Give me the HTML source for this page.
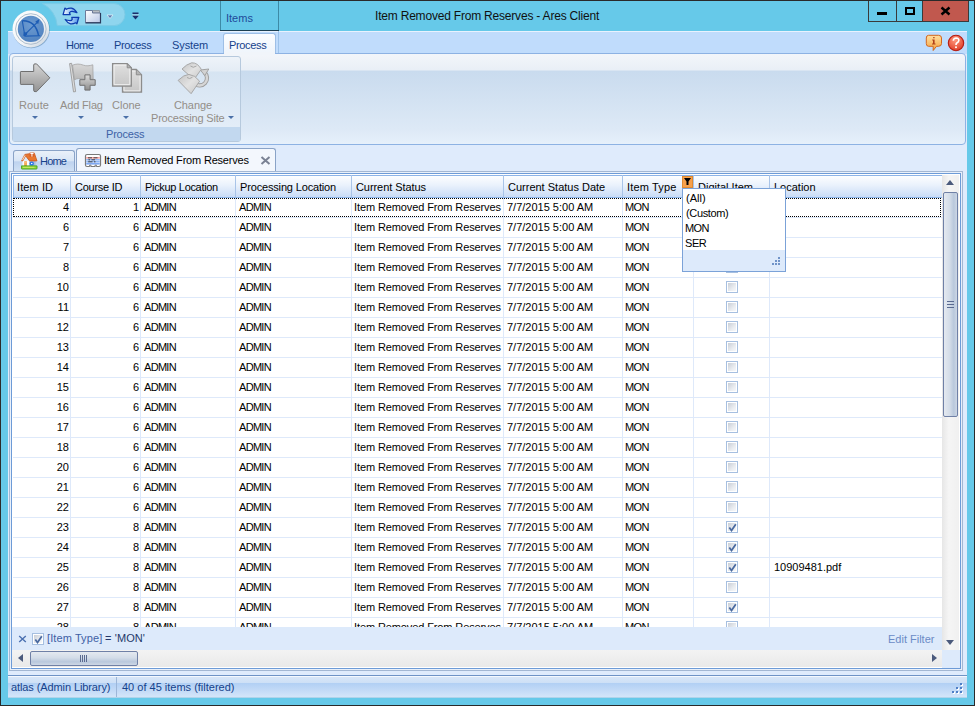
<!DOCTYPE html>
<html><head><meta charset="utf-8">
<style>
*{box-sizing:border-box;margin:0;padding:0}
html,body{width:975px;height:706px;overflow:hidden;background:#2a2a2a}
body{position:relative;font-family:"Liberation Sans",sans-serif;font-size:11px;color:#000}
.a{position:absolute}
.t{position:absolute;white-space:nowrap;line-height:12px}
#win{left:1px;top:1px;width:973px;height:704px;background:#66c9e9}
#client{left:8px;top:31px;width:959px;height:667px;background:#dfebfc}
#tabstrip{left:8px;top:31px;width:959px;height:23px;background:#c0dcfc;border-top:1px solid #e8f2fe}
.rtab{color:#15428b;font-size:11px}
#panel{left:9px;top:53px;width:957px;height:92px;border:1px solid #8db2e3;border-radius:4px;
 background:linear-gradient(#f3f6fa 0,#e9eff6 16px,#c9dbee 17px,#dde9f6 75px,#e6f0fb 100%)}
.grp{left:12px;top:56px;width:229px;height:86px;border:1px solid #b6c9dd;border-radius:3px;
 background:linear-gradient(#eef3f9 0,#e4ecf5 14px,#d6e4f2 15px,#e3edf8 70px)}
.glabel{left:13px;top:127px;width:227px;height:14px;background:#c2d8ef}
.btxt{color:#938e88;font-size:11px}
.arr{width:0;height:0;border-left:3px solid transparent;border-right:3px solid transparent;border-top:3px solid #4a70a8}
#content{left:9px;top:172px;width:953px;height:497px;border:1px solid #8aa9d4;background:#fff}
.hdr{top:175px;height:22px;background:linear-gradient(#f6f9fd,#e3ecf8 55%,#d3e1f4);border-bottom:1px solid #9fb9de;border-right:1px solid #9fb9de}
.htxt{top:181px;font-size:11px}
.row{left:13px;width:929px;height:20px;border-bottom:1px solid #dde8f6}
.cell{font-size:11px;top:0}
.vl{width:1px;background:#dde8f6}
.cb{width:12px;height:12px;border:1px solid #a6bfe0;background:#fff;padding:1px}
.cb::after{content:"";display:block;width:8px;height:8px;background:linear-gradient(135deg,#c9ced6,#e9ecf0 60%,#f7f8fa)}
</style></head><body>
<div id="win" class="a"></div>

<!-- title bar -->
<div class="t" style="left:375px;top:10px;font-size:12px;letter-spacing:-0.2px;color:#111">Item Removed From Reserves - Ares Client</div>
<!-- context header -->
<div class="a" style="left:220px;top:1px;width:1px;height:53px;background:#3d8aa6"></div>
<div class="a" style="left:278px;top:1px;width:1px;height:53px;background:#3d8aa6"></div>
<div class="a" style="left:220px;top:30px;width:59px;height:1px;background:#1c3f52"></div>
<div class="t" style="left:226px;top:12px;color:#1f4a9a">Items</div>

<!-- window buttons -->
<div class="a" style="left:868px;top:1px;width:101px;height:21px;border:1px solid #3a3a3a;border-top:0;background:#66c9e9"></div>
<div class="a" style="left:896px;top:1px;width:1px;height:20px;background:#3a3a3a"></div>
<div class="a" style="left:922px;top:1px;width:46px;height:20px;background:#c1584e;border-left:1px solid #3a3a3a"></div>
<div class="a" style="left:877px;top:12px;width:10px;height:3px;background:#000"></div>
<div class="a" style="left:905px;top:7px;width:10px;height:8px;border:2px solid #000"></div>
<svg class="a" style="left:940px;top:6px" width="11" height="10" viewBox="0 0 11 10"><path d="M1.5 1.5 L9.5 8.5 M9.5 1.5 L1.5 8.5" stroke="#000" stroke-width="2.4"/></svg>

<div id="client" class="a"></div>
<div id="tabstrip" class="a"></div>
<div class="a" style="left:278px;top:31px;width:1px;height:23px;background:#9ec3ea"></div>

<!-- quick access pill -->
<svg class="a" style="left:0;top:0" width="130" height="30" viewBox="0 0 130 30"><path d="M42.3 3.6 H114 A11 11 0 0 1 114 25.6 H57.2 A26.6 26.6 0 0 0 42.3 3.6 Z" fill="#8fd5ee" stroke="#7ccbe6" stroke-width="1"/></svg>

<!-- app orb -->
<svg class="a" style="left:10px;top:8px" width="42" height="43" viewBox="0 0 42 43">
<defs><radialGradient id="og" cx="50%" cy="35%" r="65%"><stop offset="0" stop-color="#6c9bd2"/><stop offset="1" stop-color="#5283bf"/></radialGradient>
<linearGradient id="ring" x1="0" y1="0" x2="1" y2="1"><stop offset="0" stop-color="#ffffff"/><stop offset=".6" stop-color="#f1f4f7"/><stop offset="1" stop-color="#c4d0dc"/></linearGradient></defs>
<circle cx="21.3" cy="21.6" r="18.6" fill="#3a6a96" opacity=".45"/>
<circle cx="20.85" cy="21" r="18.4" fill="url(#ring)"/>
<circle cx="20.85" cy="21" r="15.3" fill="none" stroke="#a7b8c8" stroke-width=".9"/>
<circle cx="20.85" cy="20.9" r="13.1" fill="url(#og)"/>
<path d="M12.2 12.3 L14.9 28.1 L30.2 27.8" fill="none" stroke="#1d5cb4" stroke-width="1.1"/>
<path d="M12.6 12.8 Q25.5 12.5 28.6 27.6" fill="none" stroke="#1d5cb4" stroke-width="1.5"/>
<path d="M15.5 25.8 L27 14.6" fill="none" stroke="#1d5cb4" stroke-width="1.1"/>
<path d="M25.2 13.8 L29.4 11 L28.2 16 Z" fill="#1d5cb4"/>
<path d="M13.8 24.2 L17.3 24.6 L17 26.2 L15.4 28 L13.2 27.8 Z" fill="#1d5cb4"/>
</svg>
<!-- QAT icons -->
<svg class="a" style="left:61px;top:6px" width="20" height="20" viewBox="0 0 20 20">
<defs><linearGradient id="rg" x1="0" y1="0" x2="1" y2="0"><stop offset="0" stop-color="#f4faff"/><stop offset="1" stop-color="#4f95ea"/></linearGradient></defs>
<path d="M2.1 8.6 L3.9 2.1 L5.3 3.3 Q8 1.8 10.5 2.2 Q13.5 2.8 15.9 6.6 Q13.5 5.6 11 5.3 Q9.3 5.2 8.4 6.8 L9.2 8.6 Z" fill="url(#rg)" stroke="#0d3cb0" stroke-width="1.3" stroke-linejoin="round"/>
<path d="M17.8 11.3 L15.9 17.8 L14.6 16.8 Q12 18.2 9.5 17.8 Q6.6 17.2 4.2 13.5 Q6.5 14.4 9 14.6 Q10.8 14.6 11.2 13.2 L10.8 11.3 Z" fill="url(#rg)" stroke="#0d3cb0" stroke-width="1.3" stroke-linejoin="round"/>
</svg>
<svg class="a" style="left:84px;top:9px" width="18" height="15" viewBox="0 0 18 15">
<defs><linearGradient id="fg" x1="0" y1="0" x2="1" y2="1"><stop offset="0" stop-color="#ffffff"/><stop offset="1" stop-color="#b9c6e6"/></linearGradient></defs>
<path d="M8.5 1.5 H15.5 V4 H8.5 Z" fill="#b8bcc4" stroke="#8a8f98" stroke-width=".8"/>
<path d="M1.5 1.5 H8.5 V4 H16.5 V13.5 H1.5 Z" fill="url(#fg)" stroke="#6c7a9a" stroke-width="1"/>
<path d="M16.5 4 V13.8 H1.5" fill="none" stroke="#2b3a5c" stroke-width="1.2"/>
</svg>
<svg class="a" style="left:106px;top:14px" width="8" height="6" viewBox="0 0 8 6"><path d="M1 1 H7 L4 4.5 Z" fill="#5d7bb0" stroke="#e8f6fc" stroke-width=".7"/></svg>
<svg class="a" style="left:131px;top:11px" width="9" height="10" viewBox="0 0 9 10"><rect x="1.5" y="1.5" width="6" height="1.6" fill="#1b2f6b"/><path d="M1 4.5 H8 L4.5 8.5 Z" fill="#1b2f6b"/><path d="M1 4 H8" stroke="#fff" stroke-width=".6"/></svg>
<!-- ribbon tabs -->
<svg class="a" style="left:925px;top:34px" width="18" height="18" viewBox="0 0 18 18">
<defs><linearGradient id="ig" x1="0" y1="0" x2="0" y2="1"><stop offset="0" stop-color="#ffe0a0"/><stop offset="1" stop-color="#f6a13c"/></linearGradient></defs>
<path d="M3.5 1.3 H13.5 Q16.5 1.3 16.5 4 V9.5 Q16.5 12.3 13.5 12.3 H11.5 L8.2 16.5 L8.2 12.3 H3.5 Q1.3 12.3 1.3 9.5 V4 Q1.3 1.3 3.5 1.3 Z" fill="url(#ig)" stroke="#d2661e" stroke-width="1"/>
<path d="M8.2 3 H9.6 V4.3 H8.2 Z M7.2 5.5 H9.6 V9.5 H10.5 V10.5 H7 V9.5 H8 V6.5 H7.2 Z" fill="#b2401a"/>
</svg>
<svg class="a" style="left:947px;top:34px" width="18" height="18" viewBox="0 0 18 18">
<defs><radialGradient id="hg" cx="45%" cy="30%" r="70%"><stop offset="0" stop-color="#ff9a80"/><stop offset="1" stop-color="#e0402a"/></radialGradient></defs>
<circle cx="9" cy="9" r="7.7" fill="url(#hg)" stroke="#b51c12" stroke-width="1.1"/>
<path d="M6.3 6.8 Q6.5 4 9.2 4 Q12 4.2 11.8 6.6 Q11.5 8.2 9.8 9 Q9 9.6 9 11" fill="none" stroke="#fff" stroke-width="1.6"/>
<circle cx="9" cy="13.2" r="1" fill="#fff"/>
</svg>
<div class="t rtab" style="left:66px;top:39px;letter-spacing:-0.5px">Home</div>
<div class="t rtab" style="left:114px;top:39px;letter-spacing:-0.35px">Process</div>
<div class="t rtab" style="left:172px;top:39px;letter-spacing:-0.1px">System</div>
<div class="a" style="left:223px;top:33px;width:53px;height:22px;border:1px solid #9ebfe6;border-bottom:0;border-radius:3px 3px 0 0;background:linear-gradient(#fbfdff,#eef4fb)"></div>
<div class="t rtab" style="left:229px;top:39px;letter-spacing:-0.35px">Process</div>

<!-- ribbon panel -->
<div id="panel" class="a"></div>
<div class="a grp"></div>
<div class="a glabel"></div>
<div class="a" style="left:224px;top:52px;width:51px;height:3px;background:#f1f5fa"></div>
<div class="t" style="left:106px;top:128px;color:#3d62a6;letter-spacing:-0.2px">Process</div>

<!-- ribbon icons -->
<svg class="a" style="left:18px;top:62px" width="34" height="32" viewBox="0 0 34 32">
<defs><linearGradient id="gg" x1="0" y1="0" x2="0" y2="1"><stop offset="0" stop-color="#d6d6d6"/><stop offset="1" stop-color="#939393"/></linearGradient></defs>
<path d="M3 9.5 H15.7 V3 Q15.7 1.9 17 1.9 H18.6 L31.8 15.8 L18.6 29.6 H17 Q15.7 29.6 15.7 28.5 V22.4 H3 Q2.4 22.4 2.4 21.8 V10.1 Q2.4 9.5 3 9.5 Z" fill="url(#gg)" stroke="#6f6f6f" stroke-width="1"/>
</svg>
<svg class="a" style="left:66px;top:62px" width="32" height="32" viewBox="0 0 32 32">
<defs><linearGradient id="gf" x1="0" y1="0" x2="0" y2="1"><stop offset="0" stop-color="#d8d8d8"/><stop offset="1" stop-color="#b8b8b8"/></linearGradient>
<linearGradient id="gp" x1="0" y1="0" x2="0" y2="1"><stop offset="0" stop-color="#dcdcdc"/><stop offset="1" stop-color="#8e8e8e"/></linearGradient></defs>
<path d="M6.5 3.2 C10 1.8 13.5 1.6 17.5 3.2 C20.5 4.3 23.5 3.8 26.8 2.8 L27.2 17 C24 17.8 21 18.2 17.5 17.2 C14 16 11 16.3 8.5 17.8 Z" fill="url(#gf)" stroke="#a4a4a4" stroke-width=".8"/>
<path d="M3.6 1.6 L5.6 1.3 L9.6 29.6 L7.5 29.9 Z" fill="#dedede" stroke="#9a9a9a" stroke-width=".9"/>
<path d="M18.9 12.9 H24.1 V17.7 H29.2 V23.3 H24.1 V28.1 H18.9 V23.3 H13.8 V17.7 H18.9 Z" fill="url(#gp)" stroke="#707070" stroke-width="1"/>
</svg>
<svg class="a" style="left:110px;top:61px" width="34" height="34" viewBox="0 0 34 34">
<defs><linearGradient id="gc" x1="0" y1="0" x2="0" y2="1"><stop offset="0" stop-color="#e0e0e0"/><stop offset="1" stop-color="#c6c6c6"/></linearGradient></defs>
<path d="M12.5 8.5 H26.3 L31.5 13.8 V31.2 H12.5 Z" fill="url(#gc)" stroke="#8c8c8c" stroke-width="1.3"/>
<path d="M14 10 H25.6 L30 14.5 V29.8 H14 Z" fill="none" stroke="#f2f2f2" stroke-width=".9"/>
<path d="M26.3 8.5 V13.8 H31.5" fill="#b4b4b4" stroke="#8c8c8c" stroke-width="1"/>
<path d="M2.6 2.6 H17.2 L21.3 6.8 V25.1 H2.6 Z" fill="url(#gc)" stroke="#8c8c8c" stroke-width="1.3"/>
<path d="M4.1 4.1 H16.6 L19.8 7.4 V23.6 H4.1 Z" fill="none" stroke="#f2f2f2" stroke-width=".9"/>
<path d="M17.2 2.6 V6.8 H21.3 Z" fill="#b4b4b4" stroke="#8c8c8c" stroke-width="1"/>
</svg>
<svg class="a" style="left:175px;top:60px" width="36" height="36" viewBox="0 0 36 36">
<defs><linearGradient id="gs" x1="0" y1="0" x2="1" y2="1"><stop offset="0" stop-color="#c4c4c4"/><stop offset=".5" stop-color="#e2e2e2"/><stop offset="1" stop-color="#c8c8c8"/></linearGradient></defs>
<path d="M19.5 23.5 A7 7 0 1 0 29.6 12.5" fill="none" stroke="#9c9c9c" stroke-width="4.2"/>
<path d="M19.5 23.5 A7 7 0 1 0 29.6 12.5" fill="none" stroke="#d6d6d6" stroke-width="2.4"/>
<path d="M25.4 10 L33.8 9 L29.8 15.6 Z" fill="#d2d2d2" stroke="#9c9c9c" stroke-width=".9"/>
<path d="M7 9 Q11.5 4.2 16.7 2.8 Q22.4 2.5 26.3 9.3 L19 19.5 Z" fill="url(#gs)" stroke="#a2a2a2" stroke-width=".9"/>
<path d="M3.1 20.4 Q9 14.5 13.9 14.4 Q20 15 24.6 21.2 L16.1 33.7 Z" fill="url(#gs)" stroke="#a2a2a2" stroke-width=".9"/>
<path d="M12 17.5 Q14.5 19.8 17.5 17.2" fill="none" stroke="#a0a0a0" stroke-width=".9"/>
<path d="M15.5 6 Q18 8.5 21.5 6" fill="none" stroke="#a0a0a0" stroke-width=".9"/>
</svg>
<div class="t btxt" style="left:19px;top:99px;letter-spacing:0.15px">Route</div>
<div class="a arr" style="left:32px;top:116px"></div>
<div class="t btxt" style="left:60px;top:99px;letter-spacing:-0.15px">Add Flag</div>
<div class="a arr" style="left:78px;top:116px"></div>
<div class="t btxt" style="left:112px;top:99px;letter-spacing:0px">Clone</div>
<div class="a arr" style="left:123px;top:116px"></div>
<div class="t btxt" style="left:174px;top:99px;letter-spacing:-0.1px">Change</div>
<div class="t btxt" style="left:151px;top:112px;letter-spacing:-0.2px">Processing Site</div>
<div class="a arr" style="left:228px;top:116px"></div>

<!-- doc tabs -->
<div class="a" style="left:13px;top:150px;width:62px;height:22px;border:1px solid #8aa3c7;border-bottom:0;border-radius:3px 3px 0 0;background:linear-gradient(#e9f0f9,#d9e6f6 45%,#bed3ef 52%,#c9dbf2 80%,#d3e3f6)"></div>
<svg class="a" style="left:21px;top:152px" width="17" height="18" viewBox="0 0 17 18">
<rect x="1.5" y="8.6" width="6.8" height="5.4" fill="#fbfdff"/>
<rect x="8.3" y="8.6" width="6.3" height="5.4" fill="#a9bbdb"/>
<rect x="3.2" y="9.3" width="2.7" height="4.7" fill="#f2983a"/>
<path d="M3.5 10.5 H5.6 M3.5 12 H5.6" stroke="#fbd6a8" stroke-width=".6"/>
<circle cx="10.7" cy="11.6" r="2.2" fill="#2a78ea"/>
<path d="M10 10.7 L12 11.5 L10 12.3 Z" fill="#fff"/>
<path d="M0.6 8.9 L3.9 2.4 L8.6 1.7 L13.4 1.3 L16 8.9 L8.5 8.9 L4.6 3.8 L1.8 8.9 Z" fill="#e9772f" stroke="#c8561c" stroke-width=".8" stroke-linejoin="round"/>
<path d="M1.5 8.2 L4 3.4" stroke="#ffe0c0" stroke-width="1"/>
<rect x="8.6" y="0.6" width="4.6" height="4.2" fill="#d6602a"/>
<path d="M9.4 1.5 H12.5 M10.95 1.5 V4.6" stroke="#fff" stroke-width="1"/>
<path d="M0.4 13.9 H16 V16.4 Q16 17 15.4 17 H1 Q0.4 17 0.4 16.4 Z" fill="#96d83a" stroke="#3e9e1c" stroke-width=".9"/>
<path d="M2 15.3 H13.5" stroke="#d8f070" stroke-width=".8"/>
</svg>
<div class="t" style="left:40px;top:155px;color:#15428b;letter-spacing:-0.8px">Home</div>
<div class="a" style="left:76px;top:148px;width:200px;height:25px;border:1px solid #8aa3c7;border-bottom:0;border-radius:3px 3px 0 0;background:#f3f7fd"></div>
<svg class="a" style="left:84px;top:153px" width="18" height="15" viewBox="0 0 18 15">
<rect x="1.5" y="1.5" width="15" height="12" rx="1.5" fill="#fff" stroke="#7a7a7a" stroke-width="1.2"/>
<rect x="2.2" y="4" width="13.6" height="1.6" fill="#f7a0a0"/>
<rect x="2.2" y="6" width="13.6" height="1.6" fill="#8fb6f5"/>
<rect x="2.2" y="8" width="13.6" height="1.6" fill="#8fb6f5"/>
<rect x="2.2" y="10" width="13.6" height="1.6" fill="#7ea8f2"/>
<path d="M4 4.8 H8 M9.5 4.8 H13.5 M4.5 6.8 H6 M7.5 6.8 H11 M4.2 8.8 H8.5 M10 8.8 H11.5" stroke="#444" stroke-width="1"/>
<path d="M5.5 13.5 V12.2 H7 V13.5 M11 13.5 V12.2 H12.5 V13.5" fill="#fff" stroke="#7a7a7a" stroke-width="1"/>
</svg>
<div class="t" style="left:104px;top:154px;color:#000;letter-spacing:-0.19px">Item Removed From Reserves</div>
<svg class="a" style="left:260px;top:156px" width="11" height="9" viewBox="0 0 11 9"><path d="M1.5 1 L9.5 8 M9.5 1 L1.5 8" stroke="#7a8294" stroke-width="2"/></svg>
<div class="a" style="left:9px;top:171px;width:954px;height:500px;border:1px solid #a3b7d3;background:#e9f0fa"></div>
<div class="a" style="left:11px;top:173px;width:950px;height:496px;border:1px solid #6d9bd7;background:#fff"></div>























<!--GRID-->
<div class="a" style="left:13px;top:175px;width:929px;height:452px;overflow:hidden">
<div class="a" style="left:0;top:0;width:929px;height:23px;background:linear-gradient(#fdfeff,#e9f1fc 45%,#c9dcf6);border-bottom:1px solid #8db4e8;border-left:1px solid #8db4e8;border-top:1px solid #8db4e8"></div>
<div class="t" style="left:4px;top:6px;letter-spacing:0.1px">Item ID</div>
<div class="a" style="left:57px;top:0;width:1px;height:22px;background:#a9c4e8"></div>
<div class="t" style="left:62px;top:6px;letter-spacing:-0.26px">Course ID</div>
<div class="a" style="left:127px;top:0;width:1px;height:22px;background:#a9c4e8"></div>
<div class="t" style="left:132px;top:6px;letter-spacing:-0.32px">Pickup Location</div>
<div class="a" style="left:222px;top:0;width:1px;height:22px;background:#a9c4e8"></div>
<div class="t" style="left:227px;top:6px;letter-spacing:-0.16px">Processing Location</div>
<div class="a" style="left:338px;top:0;width:1px;height:22px;background:#a9c4e8"></div>
<div class="t" style="left:343px;top:6px;letter-spacing:-0.07px">Current Status</div>
<div class="a" style="left:490px;top:0;width:1px;height:22px;background:#a9c4e8"></div>
<div class="t" style="left:495px;top:6px;letter-spacing:0px">Current Status Date</div>
<div class="a" style="left:609px;top:0;width:1px;height:22px;background:#a9c4e8"></div>
<div class="t" style="left:614px;top:6px;letter-spacing:0.15px">Item Type</div>
<div class="a" style="left:680px;top:0;width:1px;height:22px;background:#a9c4e8"></div>
<div class="t" style="left:685px;top:6px;letter-spacing:0px">Digital Item</div>
<div class="a" style="left:756px;top:0;width:1px;height:22px;background:#a9c4e8"></div>
<div class="t" style="left:761px;top:6px;letter-spacing:0px">Location</div>
<div class="a" style="left:0;top:42px;width:929px;height:1px;background:#dee9fa"></div>
<div class="t" style="left:0px;width:56px;text-align:right;top:26px">4</div>
<div class="t" style="left:58px;width:68px;text-align:right;top:26px">1</div>
<div class="t" style="left:131px;top:26px;letter-spacing:-0.7px">ADMIN</div>
<div class="t" style="left:226px;top:26px;letter-spacing:-0.7px">ADMIN</div>
<div class="t" style="left:341px;top:26px;letter-spacing:-0.11px">Item Removed From Reserves</div>
<div class="t" style="left:494px;top:26px;letter-spacing:0px">7/7/2015 5:00 AM</div>
<div class="t" style="left:612px;top:26px;letter-spacing:-0.6px">MON</div>
<div class="a cb" style="left:713px;top:26px"></div>
<div class="a" style="left:0;top:62px;width:929px;height:1px;background:#dee9fa"></div>
<div class="t" style="left:0px;width:56px;text-align:right;top:46px">6</div>
<div class="t" style="left:58px;width:68px;text-align:right;top:46px">6</div>
<div class="t" style="left:131px;top:46px;letter-spacing:-0.7px">ADMIN</div>
<div class="t" style="left:226px;top:46px;letter-spacing:-0.7px">ADMIN</div>
<div class="t" style="left:341px;top:46px;letter-spacing:-0.11px">Item Removed From Reserves</div>
<div class="t" style="left:494px;top:46px;letter-spacing:0px">7/7/2015 5:00 AM</div>
<div class="t" style="left:612px;top:46px;letter-spacing:-0.6px">MON</div>
<div class="a cb" style="left:713px;top:46px"></div>
<div class="a" style="left:0;top:82px;width:929px;height:1px;background:#dee9fa"></div>
<div class="t" style="left:0px;width:56px;text-align:right;top:66px">7</div>
<div class="t" style="left:58px;width:68px;text-align:right;top:66px">6</div>
<div class="t" style="left:131px;top:66px;letter-spacing:-0.7px">ADMIN</div>
<div class="t" style="left:226px;top:66px;letter-spacing:-0.7px">ADMIN</div>
<div class="t" style="left:341px;top:66px;letter-spacing:-0.11px">Item Removed From Reserves</div>
<div class="t" style="left:494px;top:66px;letter-spacing:0px">7/7/2015 5:00 AM</div>
<div class="t" style="left:612px;top:66px;letter-spacing:-0.6px">MON</div>
<div class="a cb" style="left:713px;top:66px"></div>
<div class="a" style="left:0;top:102px;width:929px;height:1px;background:#dee9fa"></div>
<div class="t" style="left:0px;width:56px;text-align:right;top:86px">8</div>
<div class="t" style="left:58px;width:68px;text-align:right;top:86px">6</div>
<div class="t" style="left:131px;top:86px;letter-spacing:-0.7px">ADMIN</div>
<div class="t" style="left:226px;top:86px;letter-spacing:-0.7px">ADMIN</div>
<div class="t" style="left:341px;top:86px;letter-spacing:-0.11px">Item Removed From Reserves</div>
<div class="t" style="left:494px;top:86px;letter-spacing:0px">7/7/2015 5:00 AM</div>
<div class="t" style="left:612px;top:86px;letter-spacing:-0.6px">MON</div>
<div class="a cb" style="left:713px;top:86px"></div>
<div class="a" style="left:0;top:122px;width:929px;height:1px;background:#dee9fa"></div>
<div class="t" style="left:0px;width:56px;text-align:right;top:106px">10</div>
<div class="t" style="left:58px;width:68px;text-align:right;top:106px">6</div>
<div class="t" style="left:131px;top:106px;letter-spacing:-0.7px">ADMIN</div>
<div class="t" style="left:226px;top:106px;letter-spacing:-0.7px">ADMIN</div>
<div class="t" style="left:341px;top:106px;letter-spacing:-0.11px">Item Removed From Reserves</div>
<div class="t" style="left:494px;top:106px;letter-spacing:0px">7/7/2015 5:00 AM</div>
<div class="t" style="left:612px;top:106px;letter-spacing:-0.6px">MON</div>
<div class="a cb" style="left:713px;top:106px"></div>
<div class="a" style="left:0;top:142px;width:929px;height:1px;background:#dee9fa"></div>
<div class="t" style="left:0px;width:56px;text-align:right;top:126px">11</div>
<div class="t" style="left:58px;width:68px;text-align:right;top:126px">6</div>
<div class="t" style="left:131px;top:126px;letter-spacing:-0.7px">ADMIN</div>
<div class="t" style="left:226px;top:126px;letter-spacing:-0.7px">ADMIN</div>
<div class="t" style="left:341px;top:126px;letter-spacing:-0.11px">Item Removed From Reserves</div>
<div class="t" style="left:494px;top:126px;letter-spacing:0px">7/7/2015 5:00 AM</div>
<div class="t" style="left:612px;top:126px;letter-spacing:-0.6px">MON</div>
<div class="a cb" style="left:713px;top:126px"></div>
<div class="a" style="left:0;top:162px;width:929px;height:1px;background:#dee9fa"></div>
<div class="t" style="left:0px;width:56px;text-align:right;top:146px">12</div>
<div class="t" style="left:58px;width:68px;text-align:right;top:146px">6</div>
<div class="t" style="left:131px;top:146px;letter-spacing:-0.7px">ADMIN</div>
<div class="t" style="left:226px;top:146px;letter-spacing:-0.7px">ADMIN</div>
<div class="t" style="left:341px;top:146px;letter-spacing:-0.11px">Item Removed From Reserves</div>
<div class="t" style="left:494px;top:146px;letter-spacing:0px">7/7/2015 5:00 AM</div>
<div class="t" style="left:612px;top:146px;letter-spacing:-0.6px">MON</div>
<div class="a cb" style="left:713px;top:146px"></div>
<div class="a" style="left:0;top:182px;width:929px;height:1px;background:#dee9fa"></div>
<div class="t" style="left:0px;width:56px;text-align:right;top:166px">13</div>
<div class="t" style="left:58px;width:68px;text-align:right;top:166px">6</div>
<div class="t" style="left:131px;top:166px;letter-spacing:-0.7px">ADMIN</div>
<div class="t" style="left:226px;top:166px;letter-spacing:-0.7px">ADMIN</div>
<div class="t" style="left:341px;top:166px;letter-spacing:-0.11px">Item Removed From Reserves</div>
<div class="t" style="left:494px;top:166px;letter-spacing:0px">7/7/2015 5:00 AM</div>
<div class="t" style="left:612px;top:166px;letter-spacing:-0.6px">MON</div>
<div class="a cb" style="left:713px;top:166px"></div>
<div class="a" style="left:0;top:202px;width:929px;height:1px;background:#dee9fa"></div>
<div class="t" style="left:0px;width:56px;text-align:right;top:186px">14</div>
<div class="t" style="left:58px;width:68px;text-align:right;top:186px">6</div>
<div class="t" style="left:131px;top:186px;letter-spacing:-0.7px">ADMIN</div>
<div class="t" style="left:226px;top:186px;letter-spacing:-0.7px">ADMIN</div>
<div class="t" style="left:341px;top:186px;letter-spacing:-0.11px">Item Removed From Reserves</div>
<div class="t" style="left:494px;top:186px;letter-spacing:0px">7/7/2015 5:00 AM</div>
<div class="t" style="left:612px;top:186px;letter-spacing:-0.6px">MON</div>
<div class="a cb" style="left:713px;top:186px"></div>
<div class="a" style="left:0;top:222px;width:929px;height:1px;background:#dee9fa"></div>
<div class="t" style="left:0px;width:56px;text-align:right;top:206px">15</div>
<div class="t" style="left:58px;width:68px;text-align:right;top:206px">6</div>
<div class="t" style="left:131px;top:206px;letter-spacing:-0.7px">ADMIN</div>
<div class="t" style="left:226px;top:206px;letter-spacing:-0.7px">ADMIN</div>
<div class="t" style="left:341px;top:206px;letter-spacing:-0.11px">Item Removed From Reserves</div>
<div class="t" style="left:494px;top:206px;letter-spacing:0px">7/7/2015 5:00 AM</div>
<div class="t" style="left:612px;top:206px;letter-spacing:-0.6px">MON</div>
<div class="a cb" style="left:713px;top:206px"></div>
<div class="a" style="left:0;top:242px;width:929px;height:1px;background:#dee9fa"></div>
<div class="t" style="left:0px;width:56px;text-align:right;top:226px">16</div>
<div class="t" style="left:58px;width:68px;text-align:right;top:226px">6</div>
<div class="t" style="left:131px;top:226px;letter-spacing:-0.7px">ADMIN</div>
<div class="t" style="left:226px;top:226px;letter-spacing:-0.7px">ADMIN</div>
<div class="t" style="left:341px;top:226px;letter-spacing:-0.11px">Item Removed From Reserves</div>
<div class="t" style="left:494px;top:226px;letter-spacing:0px">7/7/2015 5:00 AM</div>
<div class="t" style="left:612px;top:226px;letter-spacing:-0.6px">MON</div>
<div class="a cb" style="left:713px;top:226px"></div>
<div class="a" style="left:0;top:262px;width:929px;height:1px;background:#dee9fa"></div>
<div class="t" style="left:0px;width:56px;text-align:right;top:246px">17</div>
<div class="t" style="left:58px;width:68px;text-align:right;top:246px">6</div>
<div class="t" style="left:131px;top:246px;letter-spacing:-0.7px">ADMIN</div>
<div class="t" style="left:226px;top:246px;letter-spacing:-0.7px">ADMIN</div>
<div class="t" style="left:341px;top:246px;letter-spacing:-0.11px">Item Removed From Reserves</div>
<div class="t" style="left:494px;top:246px;letter-spacing:0px">7/7/2015 5:00 AM</div>
<div class="t" style="left:612px;top:246px;letter-spacing:-0.6px">MON</div>
<div class="a cb" style="left:713px;top:246px"></div>
<div class="a" style="left:0;top:282px;width:929px;height:1px;background:#dee9fa"></div>
<div class="t" style="left:0px;width:56px;text-align:right;top:266px">18</div>
<div class="t" style="left:58px;width:68px;text-align:right;top:266px">6</div>
<div class="t" style="left:131px;top:266px;letter-spacing:-0.7px">ADMIN</div>
<div class="t" style="left:226px;top:266px;letter-spacing:-0.7px">ADMIN</div>
<div class="t" style="left:341px;top:266px;letter-spacing:-0.11px">Item Removed From Reserves</div>
<div class="t" style="left:494px;top:266px;letter-spacing:0px">7/7/2015 5:00 AM</div>
<div class="t" style="left:612px;top:266px;letter-spacing:-0.6px">MON</div>
<div class="a cb" style="left:713px;top:266px"></div>
<div class="a" style="left:0;top:302px;width:929px;height:1px;background:#dee9fa"></div>
<div class="t" style="left:0px;width:56px;text-align:right;top:286px">20</div>
<div class="t" style="left:58px;width:68px;text-align:right;top:286px">6</div>
<div class="t" style="left:131px;top:286px;letter-spacing:-0.7px">ADMIN</div>
<div class="t" style="left:226px;top:286px;letter-spacing:-0.7px">ADMIN</div>
<div class="t" style="left:341px;top:286px;letter-spacing:-0.11px">Item Removed From Reserves</div>
<div class="t" style="left:494px;top:286px;letter-spacing:0px">7/7/2015 5:00 AM</div>
<div class="t" style="left:612px;top:286px;letter-spacing:-0.6px">MON</div>
<div class="a cb" style="left:713px;top:286px"></div>
<div class="a" style="left:0;top:322px;width:929px;height:1px;background:#dee9fa"></div>
<div class="t" style="left:0px;width:56px;text-align:right;top:306px">21</div>
<div class="t" style="left:58px;width:68px;text-align:right;top:306px">6</div>
<div class="t" style="left:131px;top:306px;letter-spacing:-0.7px">ADMIN</div>
<div class="t" style="left:226px;top:306px;letter-spacing:-0.7px">ADMIN</div>
<div class="t" style="left:341px;top:306px;letter-spacing:-0.11px">Item Removed From Reserves</div>
<div class="t" style="left:494px;top:306px;letter-spacing:0px">7/7/2015 5:00 AM</div>
<div class="t" style="left:612px;top:306px;letter-spacing:-0.6px">MON</div>
<div class="a cb" style="left:713px;top:306px"></div>
<div class="a" style="left:0;top:342px;width:929px;height:1px;background:#dee9fa"></div>
<div class="t" style="left:0px;width:56px;text-align:right;top:326px">22</div>
<div class="t" style="left:58px;width:68px;text-align:right;top:326px">6</div>
<div class="t" style="left:131px;top:326px;letter-spacing:-0.7px">ADMIN</div>
<div class="t" style="left:226px;top:326px;letter-spacing:-0.7px">ADMIN</div>
<div class="t" style="left:341px;top:326px;letter-spacing:-0.11px">Item Removed From Reserves</div>
<div class="t" style="left:494px;top:326px;letter-spacing:0px">7/7/2015 5:00 AM</div>
<div class="t" style="left:612px;top:326px;letter-spacing:-0.6px">MON</div>
<div class="a cb" style="left:713px;top:326px"></div>
<div class="a" style="left:0;top:362px;width:929px;height:1px;background:#dee9fa"></div>
<div class="t" style="left:0px;width:56px;text-align:right;top:346px">23</div>
<div class="t" style="left:58px;width:68px;text-align:right;top:346px">8</div>
<div class="t" style="left:131px;top:346px;letter-spacing:-0.7px">ADMIN</div>
<div class="t" style="left:226px;top:346px;letter-spacing:-0.7px">ADMIN</div>
<div class="t" style="left:341px;top:346px;letter-spacing:-0.11px">Item Removed From Reserves</div>
<div class="t" style="left:494px;top:346px;letter-spacing:0px">7/7/2015 5:00 AM</div>
<div class="t" style="left:612px;top:346px;letter-spacing:-0.6px">MON</div>
<div class="a cb" style="left:713px;top:346px"></div>
<svg class="a" style="left:715px;top:348px" width="9" height="9" viewBox="0 0 9 9"><path d="M1.3 4.5 L3.5 7.5 L7.8 1.3" stroke="#4a6aa0" stroke-width="1.8" fill="none"/></svg>
<div class="a" style="left:0;top:382px;width:929px;height:1px;background:#dee9fa"></div>
<div class="t" style="left:0px;width:56px;text-align:right;top:366px">24</div>
<div class="t" style="left:58px;width:68px;text-align:right;top:366px">8</div>
<div class="t" style="left:131px;top:366px;letter-spacing:-0.7px">ADMIN</div>
<div class="t" style="left:226px;top:366px;letter-spacing:-0.7px">ADMIN</div>
<div class="t" style="left:341px;top:366px;letter-spacing:-0.11px">Item Removed From Reserves</div>
<div class="t" style="left:494px;top:366px;letter-spacing:0px">7/7/2015 5:00 AM</div>
<div class="t" style="left:612px;top:366px;letter-spacing:-0.6px">MON</div>
<div class="a cb" style="left:713px;top:366px"></div>
<svg class="a" style="left:715px;top:368px" width="9" height="9" viewBox="0 0 9 9"><path d="M1.3 4.5 L3.5 7.5 L7.8 1.3" stroke="#4a6aa0" stroke-width="1.8" fill="none"/></svg>
<div class="a" style="left:0;top:402px;width:929px;height:1px;background:#dee9fa"></div>
<div class="t" style="left:0px;width:56px;text-align:right;top:386px">25</div>
<div class="t" style="left:58px;width:68px;text-align:right;top:386px">8</div>
<div class="t" style="left:131px;top:386px;letter-spacing:-0.7px">ADMIN</div>
<div class="t" style="left:226px;top:386px;letter-spacing:-0.7px">ADMIN</div>
<div class="t" style="left:341px;top:386px;letter-spacing:-0.11px">Item Removed From Reserves</div>
<div class="t" style="left:494px;top:386px;letter-spacing:0px">7/7/2015 5:00 AM</div>
<div class="t" style="left:612px;top:386px;letter-spacing:-0.6px">MON</div>
<div class="t" style="left:761px;top:386px">10909481.pdf</div>
<div class="a cb" style="left:713px;top:386px"></div>
<svg class="a" style="left:715px;top:388px" width="9" height="9" viewBox="0 0 9 9"><path d="M1.3 4.5 L3.5 7.5 L7.8 1.3" stroke="#4a6aa0" stroke-width="1.8" fill="none"/></svg>
<div class="a" style="left:0;top:422px;width:929px;height:1px;background:#dee9fa"></div>
<div class="t" style="left:0px;width:56px;text-align:right;top:406px">26</div>
<div class="t" style="left:58px;width:68px;text-align:right;top:406px">8</div>
<div class="t" style="left:131px;top:406px;letter-spacing:-0.7px">ADMIN</div>
<div class="t" style="left:226px;top:406px;letter-spacing:-0.7px">ADMIN</div>
<div class="t" style="left:341px;top:406px;letter-spacing:-0.11px">Item Removed From Reserves</div>
<div class="t" style="left:494px;top:406px;letter-spacing:0px">7/7/2015 5:00 AM</div>
<div class="t" style="left:612px;top:406px;letter-spacing:-0.6px">MON</div>
<div class="a cb" style="left:713px;top:406px"></div>
<div class="a" style="left:0;top:442px;width:929px;height:1px;background:#dee9fa"></div>
<div class="t" style="left:0px;width:56px;text-align:right;top:426px">27</div>
<div class="t" style="left:58px;width:68px;text-align:right;top:426px">8</div>
<div class="t" style="left:131px;top:426px;letter-spacing:-0.7px">ADMIN</div>
<div class="t" style="left:226px;top:426px;letter-spacing:-0.7px">ADMIN</div>
<div class="t" style="left:341px;top:426px;letter-spacing:-0.11px">Item Removed From Reserves</div>
<div class="t" style="left:494px;top:426px;letter-spacing:0px">7/7/2015 5:00 AM</div>
<div class="t" style="left:612px;top:426px;letter-spacing:-0.6px">MON</div>
<div class="a cb" style="left:713px;top:426px"></div>
<svg class="a" style="left:715px;top:428px" width="9" height="9" viewBox="0 0 9 9"><path d="M1.3 4.5 L3.5 7.5 L7.8 1.3" stroke="#4a6aa0" stroke-width="1.8" fill="none"/></svg>
<div class="a" style="left:0;top:462px;width:929px;height:1px;background:#dee9fa"></div>
<div class="t" style="left:0px;width:56px;text-align:right;top:446px">28</div>
<div class="t" style="left:58px;width:68px;text-align:right;top:446px">8</div>
<div class="t" style="left:131px;top:446px;letter-spacing:-0.7px">ADMIN</div>
<div class="t" style="left:226px;top:446px;letter-spacing:-0.7px">ADMIN</div>
<div class="t" style="left:341px;top:446px;letter-spacing:-0.11px">Item Removed From Reserves</div>
<div class="t" style="left:494px;top:446px;letter-spacing:0px">7/7/2015 5:00 AM</div>
<div class="t" style="left:612px;top:446px;letter-spacing:-0.6px">MON</div>
<div class="a cb" style="left:713px;top:446px"></div>
<div class="a" style="left:57px;top:23px;width:1px;height:430px;background:#dee9fa"></div>
<div class="a" style="left:127px;top:23px;width:1px;height:430px;background:#dee9fa"></div>
<div class="a" style="left:222px;top:23px;width:1px;height:430px;background:#dee9fa"></div>
<div class="a" style="left:338px;top:23px;width:1px;height:430px;background:#dee9fa"></div>
<div class="a" style="left:490px;top:23px;width:1px;height:430px;background:#dee9fa"></div>
<div class="a" style="left:609px;top:23px;width:1px;height:430px;background:#dee9fa"></div>
<div class="a" style="left:680px;top:23px;width:1px;height:430px;background:#dee9fa"></div>
<div class="a" style="left:756px;top:23px;width:1px;height:430px;background:#dee9fa"></div>
<div class="a" style="left:0;top:23px;width:928px;height:19px;border:1px dotted #000"></div>
</div>
<!--/GRID-->
<!--AFTERGRID-->
<!-- vertical scrollbar -->
<div class="a" style="left:942px;top:175px;width:17px;height:475px;background:linear-gradient(90deg,#e6e6e6,#f5f5f5 40%,#f0f0f0)"></div>
<div class="a" style="left:946px;top:180px;width:0;height:0;border-left:4.5px solid transparent;border-right:4.5px solid transparent;border-bottom:5px solid #4b5a7c"></div>
<div class="a" style="left:943px;top:192px;width:15px;height:225px;border:1px solid #6f80a6;border-radius:2px;background:linear-gradient(90deg,#e4e9f0,#d3dce8 45%,#b9c8dc 75%,#cdd7e5)"></div>
<div class="a" style="left:947px;top:301px;width:7px;height:7px;border-top:1px solid #5a6a90;border-bottom:1px solid #5a6a90"></div>
<div class="a" style="left:947px;top:304px;width:7px;height:1px;background:#5a6a90"></div>
<div class="a" style="left:946px;top:640px;width:0;height:0;border-left:4.5px solid transparent;border-right:4.5px solid transparent;border-top:5px solid #4b5a7c"></div>
<!-- filter bar -->
<div class="a" style="left:12px;top:627px;width:930px;height:23px;background:#ddeafb"></div>
<svg class="a" style="left:18px;top:635px" width="9" height="8" viewBox="0 0 9 8"><path d="M1.2 1 L7.8 7 M7.8 1 L1.2 7" stroke="#4a70b0" stroke-width="1.4"/></svg>
<div class="a cb" style="left:32px;top:633px"></div>
<svg class="a" style="left:34px;top:635px" width="9" height="9" viewBox="0 0 9 9"><path d="M1.3 4.5 L3.5 7.5 L7.8 1.3" stroke="#4a6aa0" stroke-width="1.8" fill="none"/></svg>
<div class="t" style="left:47px;top:632px;color:#3d5fa5;letter-spacing:0.1px">[Item Type]</div>
<div class="t" style="left:105px;top:632px;color:#24386a;letter-spacing:0.1px">= 'MON'</div>
<div class="t" style="left:888px;top:633px;color:#6b8bc6;letter-spacing:0px">Edit Filter</div>
<!-- h scrollbar -->
<div class="a" style="left:12px;top:650px;width:930px;height:17px;background:linear-gradient(#f3f3f3,#e9e9e9)"></div>
<div class="a" style="left:942px;top:650px;width:18px;height:18px;background:#ddeafb"></div>
<div class="a" style="left:18px;top:654px;width:0;height:0;border-top:4.5px solid transparent;border-bottom:4.5px solid transparent;border-right:5px solid #4b5a7c"></div>
<div class="a" style="left:932px;top:654px;width:0;height:0;border-top:4.5px solid transparent;border-bottom:4.5px solid transparent;border-left:5px solid #4b5a7c"></div>
<div class="a" style="left:30px;top:651px;width:108px;height:15px;border:1px solid #6f80a6;border-radius:2px;background:linear-gradient(#e4e9f0,#d3dce8 45%,#b9c8dc 75%,#cdd7e5)"></div>
<div class="a" style="left:80px;top:655px;width:7px;height:7px;border-left:1px solid #5a6a90;border-right:1px solid #5a6a90"></div>
<div class="a" style="left:82px;top:655px;width:1px;height:7px;background:#5a6a90"></div>
<div class="a" style="left:84px;top:655px;width:1px;height:7px;background:#5a6a90"></div>
<!-- status bar -->
<div class="a" style="left:8px;top:675px;width:959px;height:23px;border-top:1px solid #6f93c6;background:linear-gradient(#f4f8fe 0,#f4f8fe 1px,#d8e6f8 1px,#cde0f6 7px,#b1cff4 7px,#d4e5f9 21px,#8fc2dc 22px)"></div>
<div class="a" style="left:116px;top:677px;width:1px;height:20px;background:#9cb6d8"></div>
<div class="t" style="left:11px;top:681px;color:#15428b;letter-spacing:-0.1px">atlas (Admin Library)</div>
<div class="t" style="left:122px;top:681px;color:#15428b">40 of 45 items (filtered)</div>
<!-- grip -->
<div class="a" style="left:961px;top:684px;width:2px;height:2px;background:#fff"></div><div class="a" style="left:960px;top:683px;width:2px;height:2px;background:#4f7fc6"></div>
<div class="a" style="left:957px;top:688px;width:2px;height:2px;background:#fff"></div><div class="a" style="left:956px;top:687px;width:2px;height:2px;background:#4f7fc6"></div>
<div class="a" style="left:961px;top:688px;width:2px;height:2px;background:#fff"></div><div class="a" style="left:960px;top:687px;width:2px;height:2px;background:#4f7fc6"></div>
<div class="a" style="left:953px;top:692px;width:2px;height:2px;background:#fff"></div><div class="a" style="left:952px;top:691px;width:2px;height:2px;background:#4f7fc6"></div>
<div class="a" style="left:957px;top:692px;width:2px;height:2px;background:#fff"></div><div class="a" style="left:956px;top:691px;width:2px;height:2px;background:#4f7fc6"></div>
<div class="a" style="left:961px;top:692px;width:2px;height:2px;background:#fff"></div><div class="a" style="left:960px;top:691px;width:2px;height:2px;background:#4f7fc6"></div>
<!-- filter dropdown -->
<div class="a" style="left:682px;top:176px;width:11px;height:12px;background:#f7a04a;border:1px solid #e08a30"></div>
<svg class="a" style="left:683px;top:177px" width="9" height="10" viewBox="0 0 9 10"><path d="M1 1 H8 L5.5 4.5 V8 H3.5 V4.5 Z" fill="#000"/></svg>
<div class="a" style="left:682px;top:188px;width:104px;height:84px;border:1px solid #7ba2d8;background:#fff"></div>
<div class="a" style="left:683px;top:250px;width:102px;height:21px;background:#ddeafb"></div>
<div class="t" style="left:686px;top:192px">(All)</div>
<div class="t" style="left:686px;top:207px;letter-spacing:-0.35px">(Custom)</div>
<div class="t" style="left:685px;top:222px;letter-spacing:-0.6px">MON</div>
<div class="t" style="left:685px;top:237px;letter-spacing:-0.4px">SER</div>
<svg class="a" style="left:769px;top:256px" width="14" height="12" viewBox="0 0 14 12"><g fill="#6f93c8"><rect x="9" y="1" width="2" height="2"/><rect x="6" y="4" width="2" height="2"/><rect x="9" y="4" width="2" height="2"/><rect x="3" y="7" width="2" height="2"/><rect x="6" y="7" width="2" height="2"/><rect x="9" y="7" width="2" height="2"/></g></svg>
</body></html>
